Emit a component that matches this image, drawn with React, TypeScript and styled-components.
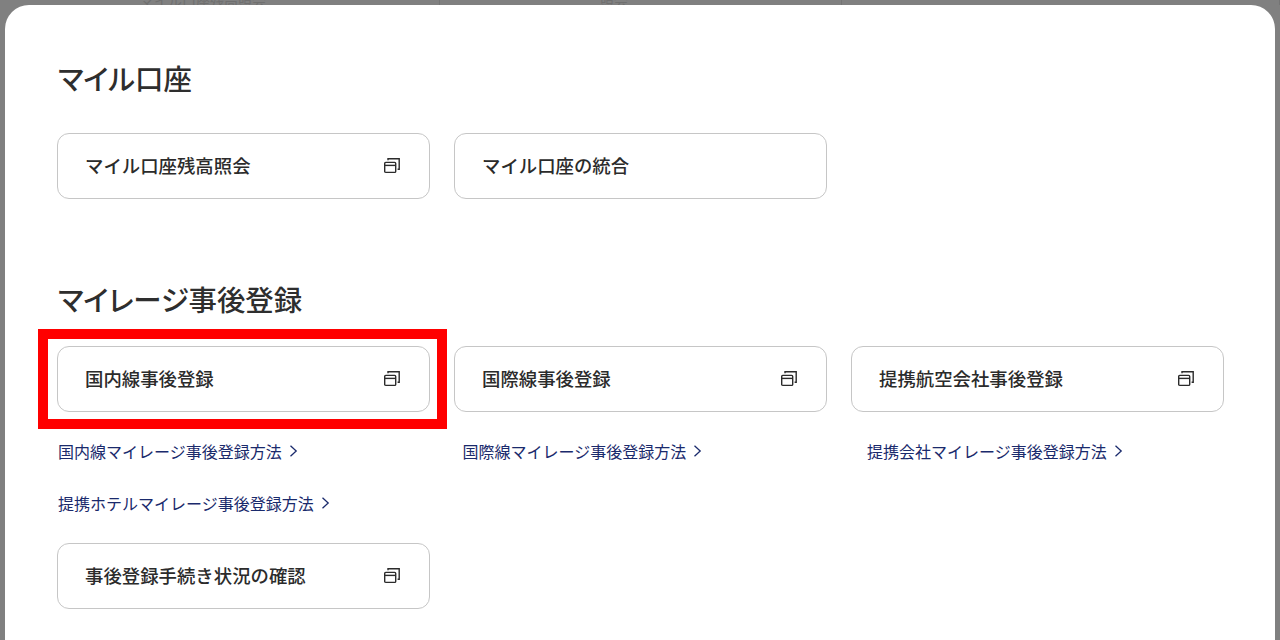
import styled, { createGlobalStyle } from "styled-components";

const GlobalStyle = createGlobalStyle`
  html, body {
    margin: 0;
    height: 640px;
    overflow: hidden;
    background: #808080;
    font-family: "Noto Sans CJK JP", "Noto Sans", sans-serif;
  }
`;

const Page = styled.div`
  position: relative;
  height: 640px;
  padding: 5px 5px 0;
  box-sizing: border-box;
  overflow: hidden;
`;

// table of the page under the dim layer, only its last row's bottom edge shows
const Behind = styled.div`
  position: absolute;
  top: 0;
  left: 0;
  right: 0;
  height: 5px;
  display: grid;
  grid-template-columns: 440px 402px 1fr;
  overflow: hidden;
`;

const BehindCell = styled.div<{ $indent: number }>`
  height: 5px;
  border-right: 1px solid #747474;
  box-sizing: border-box;
  padding-left: ${(props) => props.$indent}px;
  font-size: 14px;
  line-height: 1px;
  color: #6f6f6f;
  white-space: nowrap;
`;

const Modal = styled.main`
  position: relative;
  height: 700px;
  background: #ffffff;
  border-radius: 24px 24px 0 0;
  padding: 54px 0 0 52px;
  box-sizing: border-box;
  color: #2b2b2b;
`;

const SectionTitle = styled.h2<{ $gap: number }>`
  margin: 0 0 ${(props) => props.$gap}px;
  padding-left: 1px;
  font-size: 28.4px;
  line-height: 38px;
  font-weight: 500;
  font-feature-settings: "palt";
  color: #2e2e2e;
`;

const CardGrid = styled.div<{ $after?: number }>`
  display: grid;
  grid-template-columns: repeat(3, 373px);
  gap: 24px;
  margin-bottom: ${(props) => props.$after ?? 0}px;
`;

const Card = styled.a`
  position: relative;
  height: 66px;
  box-sizing: border-box;
  display: flex;
  align-items: center;
  justify-content: space-between;
  padding: 0 29px 0 27px;
  background: #fff;
  border: 1px solid #c6c6c6;
  border-radius: 12px;
  font-size: 18.4px;
  font-weight: 500;
  color: #2b2b2b;
`;

const CardLabel = styled.span`
  margin-top: -2px;
`;

const Highlight = styled.span`
  position: absolute;
  top: -18px;
  bottom: -18px;
  left: -20px;
  right: -18px;
  border: 10px solid #ff0000;
  pointer-events: none;
`;

const LinkGrid = styled.div`
  display: grid;
  grid-template-columns: repeat(3, 404.5px);
  row-gap: 28px;
  margin: 27px 0 28px;
  padding-left: 1px;
`;

const TextLink = styled.a`
  display: flex;
  align-items: center;
  gap: 7px;
  font-size: 16px;
  line-height: 24px;
  color: #1a2a6c;
`;

function WindowIcon() {
  return (
    <svg width="16" height="16" viewBox="0 0 16 16" fill="none" stroke="#2b2b2b" strokeWidth="1.4">
      <rect x="0.7" y="4.4" width="11" height="10" rx="1" />
      <path d="M0.7 7.4H11.7" />
      <path d="M4 2.2V0.8H15.2V11.2H13.6" />
    </svg>
  );
}

function Chevron() {
  return (
    <svg width="9" height="12" viewBox="0 0 9 12" fill="none" stroke="#1a2a6c" strokeWidth="1.3">
      <path d="M1.5 0.8L7.2 6L1.5 11.2" />
    </svg>
  );
}

function App() {
  return (
    <>
      <GlobalStyle />
      <Page>
        <Behind>
          <BehindCell $indent={140}>マイル口座残高照会</BehindCell>
          <BehindCell $indent={160}>照会</BehindCell>
          <BehindCell $indent={0} />
        </Behind>
        <Modal>
          <SectionTitle $gap={36}>マイル口座</SectionTitle>
          <CardGrid $after={81}>
            <Card>
              <CardLabel>マイル口座残高照会</CardLabel>
              <WindowIcon />
            </Card>
            <Card>
              <CardLabel>マイル口座の統合</CardLabel>
            </Card>
          </CardGrid>

          <SectionTitle $gap={28}>マイレージ事後登録</SectionTitle>
          <CardGrid>
            <Card>
              <CardLabel>国内線事後登録</CardLabel>
              <WindowIcon />
              <Highlight />
            </Card>
            <Card>
              <CardLabel>国際線事後登録</CardLabel>
              <WindowIcon />
            </Card>
            <Card>
              <CardLabel>提携航空会社事後登録</CardLabel>
              <WindowIcon />
            </Card>
          </CardGrid>
          <LinkGrid>
            <TextLink>
              国内線マイレージ事後登録方法
              <Chevron />
            </TextLink>
            <TextLink>
              国際線マイレージ事後登録方法
              <Chevron />
            </TextLink>
            <TextLink>
              提携会社マイレージ事後登録方法
              <Chevron />
            </TextLink>
            <TextLink>
              提携ホテルマイレージ事後登録方法
              <Chevron />
            </TextLink>
          </LinkGrid>
          <CardGrid>
            <Card>
              <CardLabel>事後登録手続き状況の確認</CardLabel>
              <WindowIcon />
            </Card>
          </CardGrid>
        </Modal>
      </Page>
    </>
  );
}

export default App;
